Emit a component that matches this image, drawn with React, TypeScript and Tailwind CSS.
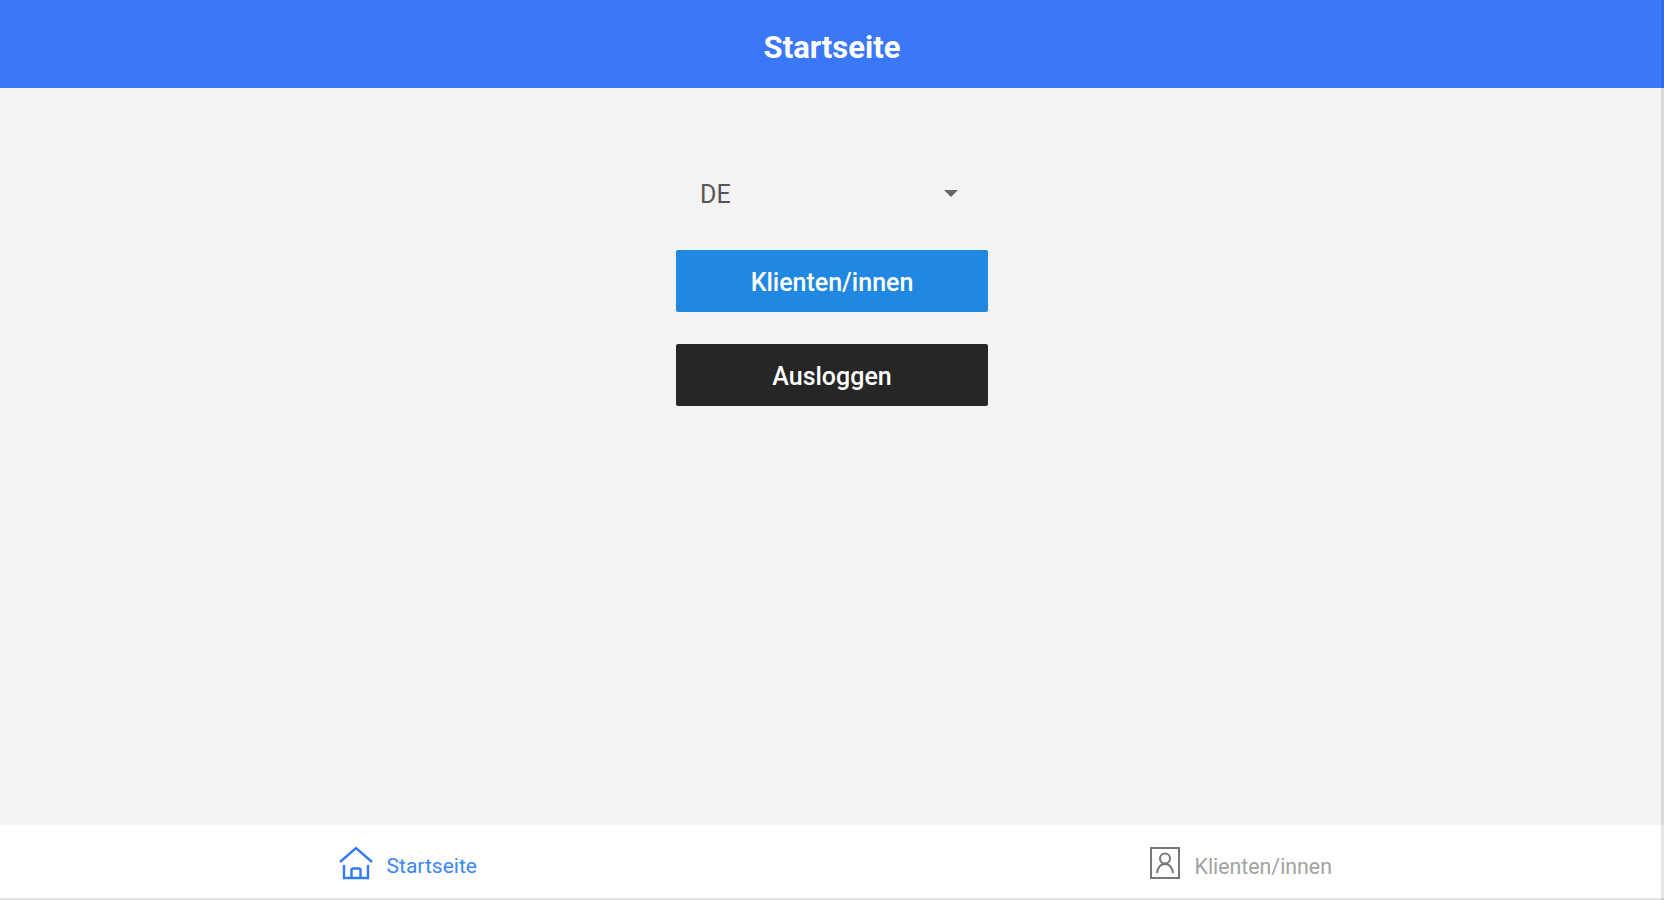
export default function App() {
  return (
    <div className="relative flex h-[900px] flex-col overflow-hidden bg-[#f3f3f3] font-['Roboto',sans-serif]">
      {/* header */}
      <div className="flex h-[88px] items-center justify-center bg-[#3a78f8] pt-2">
        <h1 className="text-[31px] font-bold text-white">Startseite</h1>
      </div>

      <div className="flex flex-1 flex-col items-center pt-[82px]">
        <div className="flex h-[50px] w-[312px] items-center justify-between pl-6 pr-[30px]">
          <span className="text-[25px] text-[#555555]">DE</span>
          <span className="mb-1 h-0 w-0 border-x-[7px] border-t-[7px] border-x-transparent border-t-[#666666]" />
        </div>
        <button className="mt-[30px] h-[62px] w-[312px] rounded-[2px] bg-[#2088e0] pt-1 text-[25px] font-medium text-white">
          Klienten/innen
        </button>
        <button className="mt-[32px] h-[62px] w-[312px] rounded-[2px] bg-[#262626] pt-1 text-[25px] font-medium text-white">
          Ausloggen
        </button>
      </div>

      {/* bottom tabs */}
      <div className="flex h-[75px] border-b-2 border-[#e4e4e4] bg-white">
        <div className="flex flex-1 items-center justify-center gap-[14px] pr-[17px] pt-[3px]">
          <svg width="34" height="34" viewBox="0 0 34 34" fill="none" stroke="#2f7cf6" strokeWidth="2.4">
            <path d="M1 16 L17 2 L33 16" />
            <path d="M5 19 V32 H29 V19" />
            <path d="M12.5 32 V24 Q12.5 22.5 14 22.5 H20 Q21.5 22.5 21.5 24 V32" />
          </svg>
          <span className="mt-[8px] text-[21px] text-[#3a86f8]">Startseite</span>
        </div>
        <div className="flex flex-1 items-center justify-center gap-[14px] pr-[16px] pt-[3px]">
          <svg width="32" height="34" viewBox="0 0 32 34" fill="none" stroke="#777777" strokeWidth="2">
            <rect x="2" y="2" width="28" height="30" />
            <circle cx="16" cy="12.5" r="5" />
            <path d="M8 27 C9 21 12 18 16 18 C20 18 23 21 24 27" />
          </svg>
          <span className="mt-[8px] text-[21.3px] text-[#a3a3a3]">Klienten/innen</span>
        </div>
      </div>

      {/* faint strip on the right edge of the capture */}
      <div className="absolute inset-y-0 right-0 w-[3px] bg-black/10" />
    </div>
  );
}
